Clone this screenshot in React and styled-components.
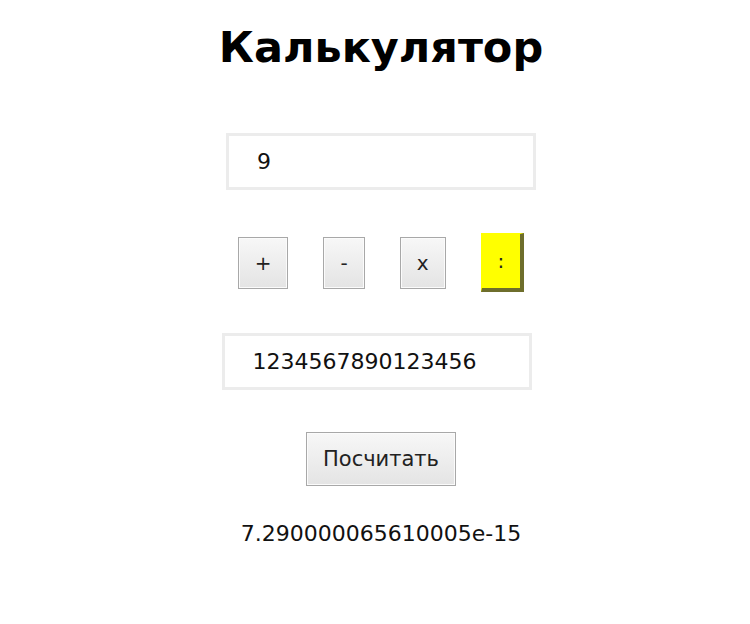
import { useState } from "react";
import styled, { createGlobalStyle, css } from "styled-components";

const GlobalStyle = createGlobalStyle`
  body {
    margin: 0;
    background: #fff;
    font-family: "DejaVu Sans", Verdana, sans-serif;
    color: #111;
  }
`;

const Page = styled.main`
  display: flex;
  flex-direction: column;
  align-items: center;
  padding: 23px 0 0 12px;
`;

const Title = styled.h1`
  margin: 0;
  font-size: 43px;
  line-height: 49px;
  font-weight: 700;
  color: #000;
`;

const NumberInput = styled.input`
  box-sizing: border-box;
  width: 310px;
  height: 57px;
  margin-top: ${(p) => p.$top}px;
  margin-left: ${(p) => p.$shift || 0}px;
  padding: 0 0 0 28px;
  border: 3px solid #ececec;
  background: #fff;
  font-family: inherit;
  font-size: 22px;
  color: #111;
  outline: none;
`;

const Operations = styled.div`
  display: flex;
  align-items: center;
  gap: 35px;
  height: 57px;
  margin-top: 44px;
`;

const OpButton = styled.button`
  box-sizing: border-box;
  height: 52px;
  padding: 0 16px;
  border: 1px solid #a8a8a8;
  background: linear-gradient(#f7f7f7, #e4e4e4);
  box-shadow: inset 0 0 0 1px #fbfbfb;
  font-family: inherit;
  font-size: 20px;
  color: #222;
  cursor: pointer;

  ${(p) =>
    p.$active &&
    css`
      height: 59px;
      padding: 0 16px;
      background: #ffff00;
      box-shadow: none;
      border-style: solid;
      border-width: 1px 4px 4px 1px;
      border-color: #ffff00 #6e6e2c #6e6e2c #ffff00;
    `}
`;

const CalcButton = styled.button`
  box-sizing: border-box;
  width: 150px;
  height: 54px;
  margin-top: 42px;
  border: 1px solid #a8a8a8;
  background: linear-gradient(#f7f7f7, #e4e4e4);
  box-shadow: inset 0 0 0 1px #fbfbfb;
  font-family: inherit;
  font-size: 21px;
  color: #222;
  cursor: pointer;
`;

const Result = styled.p`
  margin: 35px 0 0;
  font-size: 22px;
  line-height: 26px;
  color: #111;
`;

const OPS = ["+", "-", "x", ":"];

export default function App() {
  const [first, setFirst] = useState("9");
  const [second, setSecond] = useState("1234567890123456");
  const [op, setOp] = useState(":");

  return (
    <Page>
      <GlobalStyle />
      <Title>Калькулятор</Title>
      <NumberInput
        $top={61}
        value={first}
        onChange={(e) => setFirst(e.target.value)}
      />
      <Operations>
        {OPS.map((o) => (
          <OpButton key={o} $active={o === op} onClick={() => setOp(o)}>
            {o}
          </OpButton>
        ))}
      </Operations>
      <NumberInput
        $top={42}
        $shift={-9}
        value={second}
        onChange={(e) => setSecond(e.target.value)}
      />
      <CalcButton>Посчитать</CalcButton>
      <Result>7.290000065610005e-15</Result>
    </Page>
  );
}
